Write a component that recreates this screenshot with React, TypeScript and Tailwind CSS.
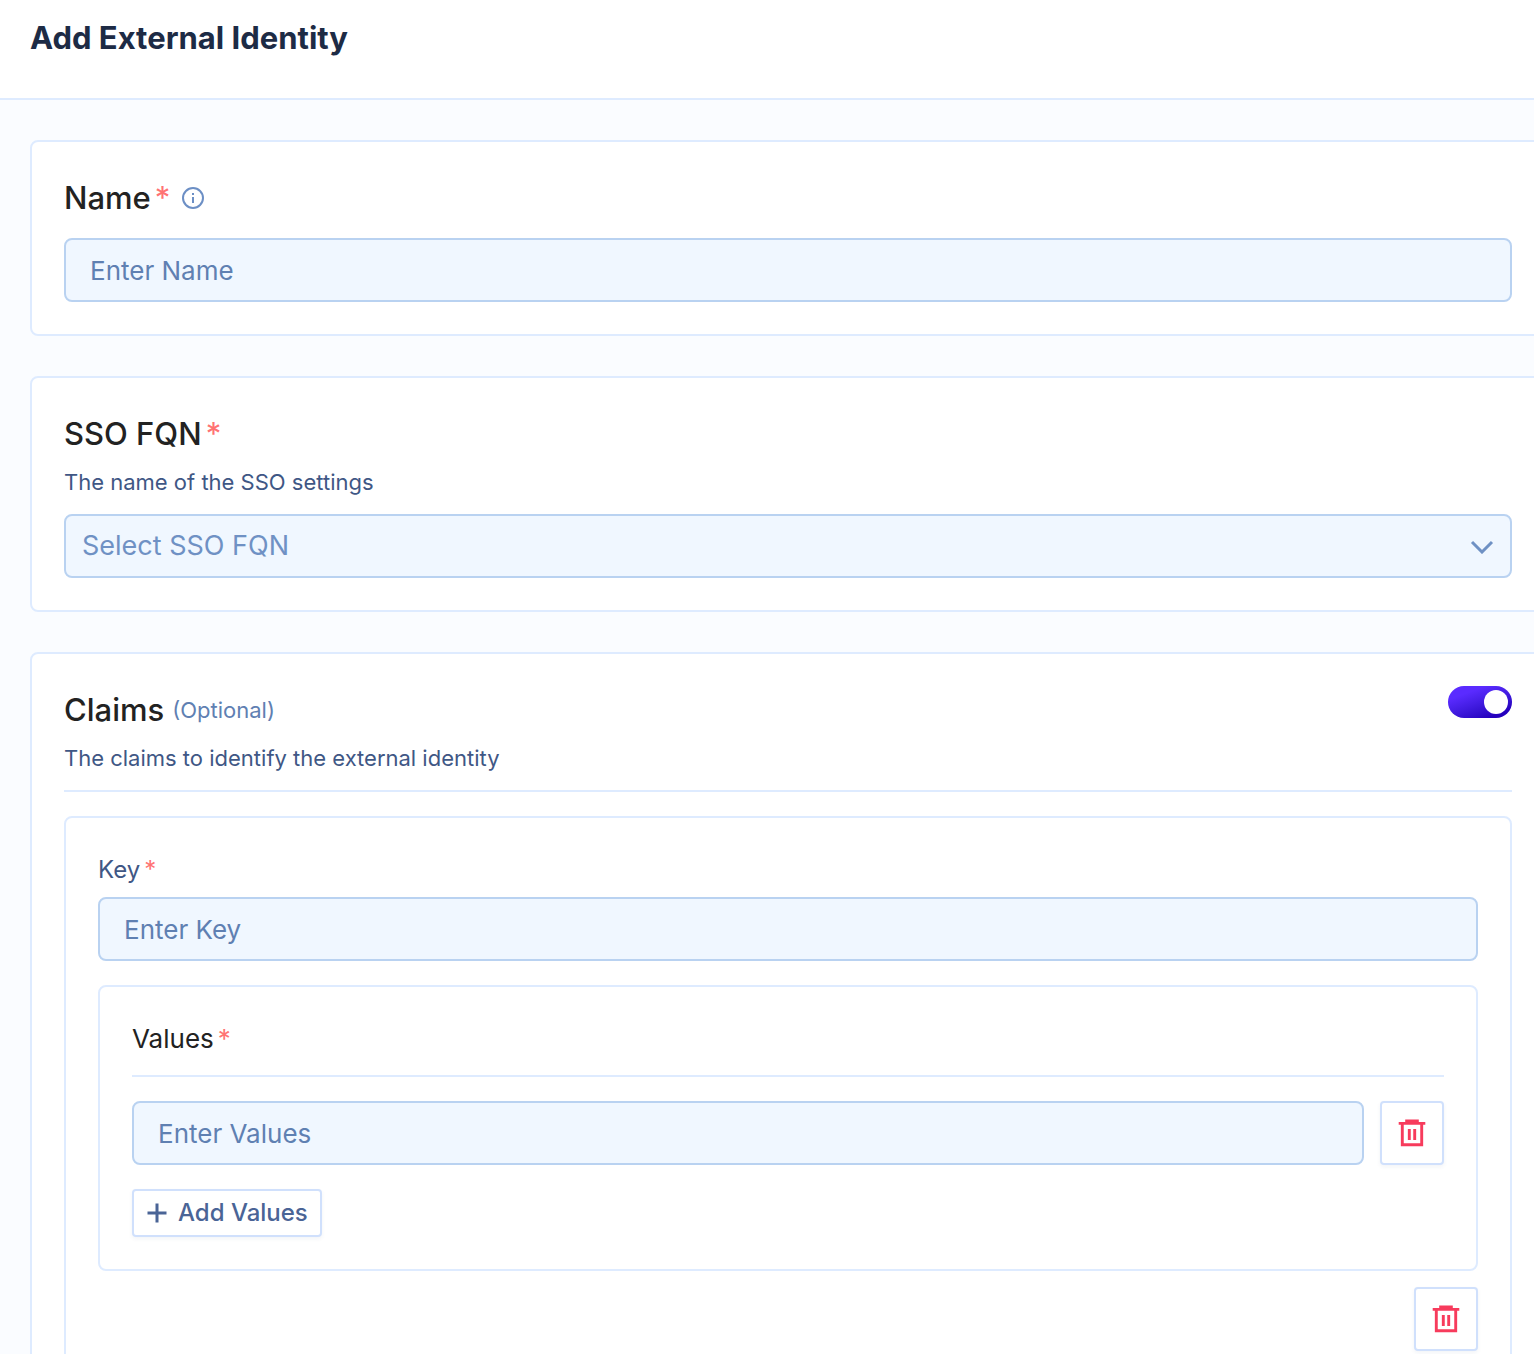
import { useState, type ReactNode } from "react";

const fieldClass =
  "block h-16 w-full min-w-0 rounded-lg border-2 border-[#b9d2f1] bg-[#f0f7ff] outline-none focus:border-[#6f91c4]";

function Required() {
  return <span className="ml-1 font-normal text-[#ff7373]">*</span>;
}

function Card({ children }: { children: ReactNode }) {
  return (
    <section className="rounded-lg border-2 border-[#deebff] bg-white p-8">
      {children}
    </section>
  );
}

function TextField({ id, placeholder }: { id: string; placeholder: string }) {
  return (
    <input
      id={id}
      type="text"
      placeholder={placeholder}
      className={`${fieldClass} px-6 text-[26px] text-[#222222] placeholder:text-[#5f80b2]`}
    />
  );
}

function InfoIcon() {
  return (
    <svg viewBox="0 0 22 22" className="h-[22px] w-[22px]" fill="none" aria-hidden="true">
      <circle cx="11" cy="11" r="10" stroke="#6c8fc5" strokeWidth="2" />
      <path d="M11 10v6" stroke="#6c8fc5" strokeWidth="2" />
      <path d="M11 6v2" stroke="#6c8fc5" strokeWidth="2" />
    </svg>
  );
}

function DeleteButton({ label }: { label: string }) {
  return (
    <button
      type="button"
      aria-label={label}
      className="flex h-16 w-16 shrink-0 items-center justify-center rounded-sm border-2 border-[#d0e0fc] bg-white shadow-[0_2px_4px_rgba(30,60,120,0.06)]"
    >
      <svg viewBox="0 0 28 28" className="h-7 w-7" fill="none" aria-hidden="true">
        <path d="M7.2 0.6h13.6v2.3h6.5v2.8H0.7V2.9h6.5z" fill="#f73b5c" />
        <path d="M4.3 5v20.7h19.4V5" stroke="#f73b5c" strokeWidth="2.9" />
        <path d="M11.3 10v11M16.7 10v11" stroke="#f73b5c" strokeWidth="2.9" />
      </svg>
    </button>
  );
}

export default function App() {
  const [claimsOn, setClaimsOn] = useState(true);

  return (
    <div className="flex h-screen flex-col overflow-hidden bg-[#fafcff] font-['Inter','Liberation_Sans',sans-serif] text-[#222222]">
      <header className="shrink-0 border-b-2 border-[#deebff] bg-white px-[30px] pt-4 pb-[38px]">
        <h1 className="text-[31px] leading-11 font-bold text-[#1d2b45]">
          Add External Identity
        </h1>
      </header>

      <main className="min-h-0 flex-1 overflow-x-hidden overflow-y-auto py-10 pl-[30px] [scrollbar-width:none]">
        <form className="-mr-3 flex flex-col gap-10">
          <Card>
            <div className="mb-4 flex h-12 items-center text-[31px] font-medium">
              <label htmlFor="name">
                Name
                <Required />
              </label>
              <button type="button" aria-label="About the name" className="ml-3">
                <InfoIcon />
              </button>
            </div>
            <TextField id="name" placeholder="Enter Name" />
          </Card>

          <Card>
            <label htmlFor="sso" className="block text-[31px] leading-12 font-medium">
              SSO FQN
              <Required />
            </label>
            <p className="mb-2 text-[22px] leading-12 text-[#3f5785]">
              The name of the SSO settings
            </p>
            <div className="relative">
              <select
                id="sso"
                defaultValue=""
                className={`${fieldClass} appearance-none pr-16 pl-4 text-[27px] text-[#6f91c4]`}
              >
                <option value="">Select SSO FQN</option>
              </select>
              <svg
                viewBox="0 0 24 14"
                className="pointer-events-none absolute top-[26px] right-[18px] h-[14px] w-6"
                fill="none"
                aria-hidden="true"
              >
                <path d="M2 2l10 10L22 2" stroke="#6f91c4" strokeWidth="3" />
              </svg>
            </div>
          </Card>

          <Card>
            <div className="mb-6 border-b-2 border-[#deebff] pb-2">
              <div className="flex items-start justify-between">
                <label
                  htmlFor="claims"
                  className="flex h-12 items-center gap-2 text-[31px] font-medium"
                >
                  Claims
                  <span className="text-[22px] font-normal text-[#5f80b2]">(Optional)</span>
                </label>
                <input
                  id="claims"
                  type="checkbox"
                  role="switch"
                  checked={claimsOn}
                  onChange={(e) => setClaimsOn(e.target.checked)}
                  className="flex h-8 w-16 cursor-pointer appearance-none items-center rounded-full bg-[#b9d2f1] px-1 before:h-6 before:w-6 before:rounded-full before:bg-white checked:justify-end checked:bg-linear-160 checked:from-[#5a2bff] checked:from-25% checked:to-[#2500bd] checked:to-85%"
                />
              </div>
              <p className="text-[22px] leading-12 text-[#3f5785]">
                The claims to identify the external identity
              </p>
            </div>

            <Card>
              <label htmlFor="key" className="mb-[7px] block text-[24px] leading-10 text-[#3f5785]">
                Key
                <Required />
              </label>
              <TextField id="key" placeholder="Enter Key" />

              <div className="mt-6 mb-4">
                <Card>
                  <label
                    htmlFor="values"
                    className="mb-6 block border-b-2 border-[#deebff] pb-4 text-[26px] leading-10"
                  >
                    Values
                    <Required />
                  </label>
                  <div className="mb-6 flex gap-4">
                    <TextField id="values" placeholder="Enter Values" />
                    <DeleteButton label="Delete value" />
                  </div>
                  <button
                    type="button"
                    className="flex h-12 items-center gap-[10px] rounded-sm border-2 border-[#d0e0fc] bg-white px-3 text-[24px] font-medium text-[#4a6496] shadow-[0_2px_4px_rgba(30,60,120,0.06)]"
                  >
                    <svg viewBox="0 0 22 22" className="h-[22px] w-[22px]" fill="none" aria-hidden="true">
                      <path d="M11 1.5v19M1.5 11h19" stroke="currentColor" strokeWidth="3" />
                    </svg>
                    Add Values
                  </button>
                </Card>
              </div>

              <div className="flex justify-end">
                <DeleteButton label="Delete claim" />
              </div>
            </Card>
          </Card>
        </form>
      </main>
    </div>
  );
}
